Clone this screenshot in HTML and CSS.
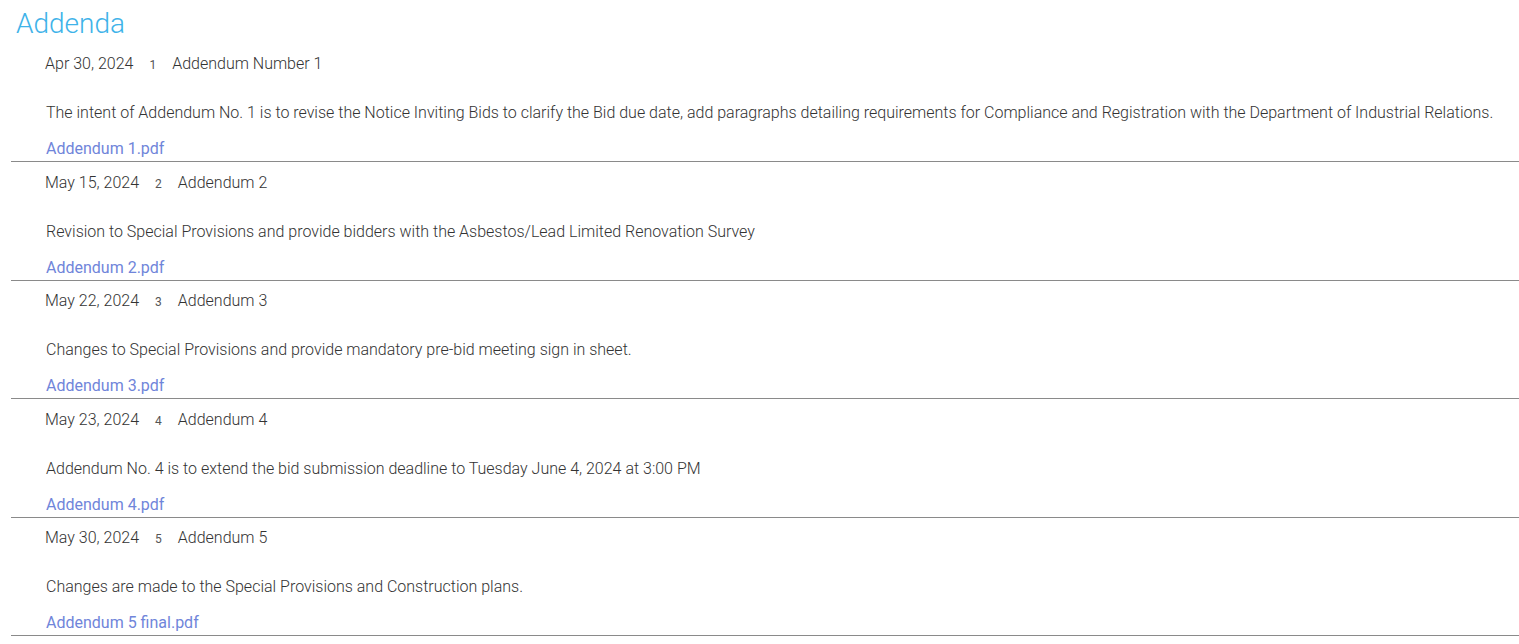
FILE: index.html
```html
<!DOCTYPE html>
<html lang="en">
<head>
<meta charset="utf-8">
<title>Addenda</title>
<link rel="stylesheet" href="styles.css">
</head>
<body>
<div class="page">
  <h2 class="title">Addenda</h2>
  <ul class="addenda">
    <li class="item">
      <div class="head"><span class="date">Apr 30, 2024</span><span class="num">1</span><span class="name">Addendum Number 1</span></div>
      <p class="desc">The intent of Addendum No. 1 is to revise the Notice Inviting Bids to clarify the Bid due date, add paragraphs detailing requirements for Compliance and Registration with the Department of Industrial Relations.</p>
      <a class="file" href="#">Addendum 1.pdf</a>
    </li>
    <li class="item">
      <div class="head"><span class="date">May 15, 2024</span><span class="num">2</span><span class="name">Addendum 2</span></div>
      <p class="desc">Revision to Special Provisions and provide bidders with the Asbestos/Lead Limited Renovation Survey</p>
      <a class="file" href="#">Addendum 2.pdf</a>
    </li>
    <li class="item">
      <div class="head"><span class="date">May 22, 2024</span><span class="num">3</span><span class="name">Addendum 3</span></div>
      <p class="desc">Changes to Special Provisions and provide mandatory pre-bid meeting sign in sheet.</p>
      <a class="file" href="#">Addendum 3.pdf</a>
    </li>
    <li class="item">
      <div class="head"><span class="date">May 23, 2024</span><span class="num">4</span><span class="name">Addendum 4</span></div>
      <p class="desc">Addendum No. 4 is to extend the bid submission deadline to Tuesday June 4, 2024 at 3:00 PM</p>
      <a class="file" href="#">Addendum 4.pdf</a>
    </li>
    <li class="item">
      <div class="head"><span class="date">May 30, 2024</span><span class="num">5</span><span class="name">Addendum 5</span></div>
      <p class="desc">Changes are made to the Special Provisions and Construction plans.</p>
      <a class="file" href="#">Addendum 5 final.pdf</a>
    </li>
  </ul>
</div>
</body>
</html>
```
FILE: styles.css
```css
html, body {
  margin: 0;
  padding: 0;
  background: #fff;
}
body {
  font-family: Roboto, "Liberation Sans", Arial, sans-serif;
  color: #333;
}
.page {
  padding: 5px 0 0 11px;
}
.title {
  margin: 0;
  padding-left: 5px;
  font-size: 28px;
  line-height: 38.5px;
  font-weight: 300;
  color: #3fb3e9;
}
.addenda {
  list-style: none;
  margin: 0;
  padding: 0;
}
.item {
  box-sizing: border-box;
  height: 118.5px;
  padding: 8.5px 0 0 35px;
  border-bottom: 1px solid #8a8a8a;
  display: flex;
  flex-direction: column;
  align-items: flex-start;
}
.head {
  display: flex;
  align-items: baseline;
  line-height: 24px;
  font-size: 16px;
  font-weight: 300;
  margin-left: -1px;
}
.num {
  font-size: 12px;
  font-weight: 400;
  color: #555;
  margin: 0 16px 0 16px;
}
.desc {
  margin: 24px 0 0 0;
  font-size: 16px;
  line-height: 24px;
  font-weight: 300;
}
.file {
  margin-top: 12px;
  font-size: 16px;
  line-height: 24px;
  font-weight: 400;
  color: #7085da;
  text-decoration: none;
}
```
